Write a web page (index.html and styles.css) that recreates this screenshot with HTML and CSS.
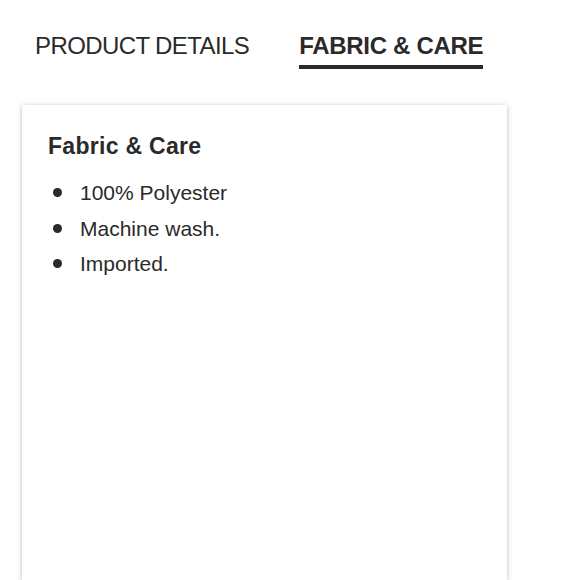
FILE: index.html
```html
<!DOCTYPE html>
<html>
<head>
<meta charset="utf-8">
<link rel="stylesheet" href="styles.css">
</head>
<body>
<div class="tabs">
  <div class="tab">PRODUCT DETAILS</div>
  <div class="tab active">FABRIC &amp; CARE</div>
</div>
<div class="card">
  <h2 class="card-title">Fabric &amp; Care</h2>
  <ul class="list">
    <li>100% Polyester</li>
    <li>Machine wash.</li>
    <li>Imported.</li>
  </ul>
</div>
</body>
</html>
```
FILE: styles.css
```css
html, body {
  margin: 0;
  padding: 0;
  background: #fff;
}
body {
  font-family: "Liberation Sans", Arial, sans-serif;
  color: #2a2a2a;
  width: 580px;
  height: 580px;
  overflow: hidden;
}
.tabs {
  display: flex;
  gap: 50px;
  padding: 31px 0 0 35px;
}
.tab {
  font-size: 24px;
  line-height: 30px;
  letter-spacing: -0.6px;
  padding-bottom: 4px;
  border-bottom: 4px solid transparent;
}
.tab.active {
  font-weight: bold;
  letter-spacing: -0.3px;
  border-bottom-color: #2a2a2a;
}
.card {
  margin: 36px 0 0 22px;
  width: 485px;
  height: 476px;
  background: #fff;
  box-shadow: 0 1px 5px rgba(0, 0, 0, 0.28);
  padding: 26px 26px;
  box-sizing: border-box;
}
.card-title {
  margin: 0;
  font-size: 23px;
  line-height: 30px;
  letter-spacing: 0.3px;
  font-weight: bold;
}
.list {
  list-style: none;
  margin: 14px 0 0;
  padding: 0;
}
.list li {
  display: flex;
  align-items: center;
  font-size: 21px;
  line-height: 35.5px;
}
.list li::before {
  content: "";
  width: 9px;
  height: 9px;
  border-radius: 50%;
  background: #2a2a2a;
  margin: 0 18px 0 5px;
  flex: none;
}
```
